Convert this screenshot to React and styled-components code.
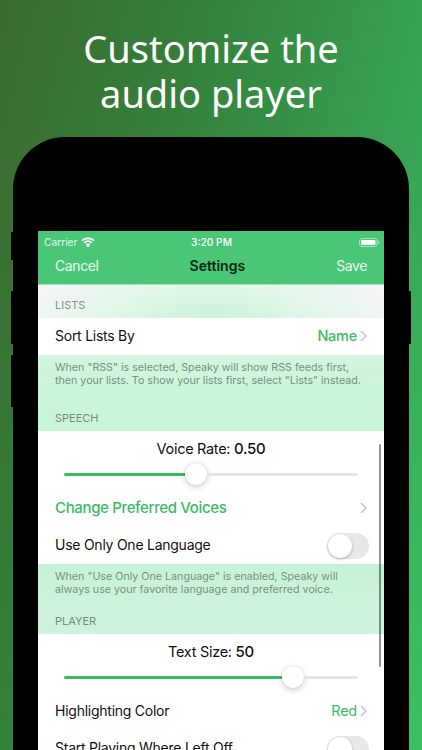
import React from 'react';
import styled, { createGlobalStyle } from 'styled-components';

//------------------ Styles ----------------------

const GlobalStyle = createGlobalStyle`
  html, body {
    margin: 0;
    padding: 0;
    background: #357a35;
  }
`;

const Page = styled.div`
  width: 422px;
  height: 750px;
  overflow: hidden;
  background: linear-gradient(105deg, #3a6a2e 0%, #35803a 32%, #37a052 68%, #3cc063 100%);
  font-family: Inter, 'Liberation Sans', sans-serif;
`;

const Headline = styled.h1`
  margin: 0;
  height: 137px;
  box-sizing: border-box;
  padding-top: 26px;
  font-family: 'Noto Sans', 'Open Sans', sans-serif;
  font-weight: 400;
  font-size: 38px;
  line-height: 45px;
  text-align: center;
  color: #fff;
`;

const Phone = styled.div`
  position: relative;
  width: 396px;
  height: 700px;
  margin-left: 13px;
  box-sizing: border-box;
  padding: 94px 25px 0;
  background: #000;
  border-radius: 52px 52px 0 0;
`;

const SideButton = styled.span`
  position: absolute;
  top: ${props => props.$top}px;
  ${props => props.$side}: -2px;
  width: 2px;
  height: ${props => props.$height}px;
  background: #000;
`;

const Screen = styled.div`
  position: relative;
  height: 606px;
  overflow: hidden;
  background: #fff;
`;

const TopBar = styled.header`
  height: 53px;
  background: #4ac776;
  border-bottom: 1px solid #a5e0b8;
  color: #fff;
`;

const StatusBar = styled.div`
  display: grid;
  grid-template-columns: 1fr auto 1fr;
  align-items: center;
  height: 22px;
  padding: 0 5px 0 6px;
  font-size: 10.2px;
  font-weight: 500;
`;

const Carrier = styled.div`
  display: flex;
  align-items: center;
  gap: 4px;
  font-weight: 400;
  color: #e4f7ea;
`;

const BatteryWrap = styled.div`
  justify-self: end;
  display: flex;
`;

const NavBar = styled.nav`
  display: flex;
  justify-content: space-between;
  align-items: center;
  box-sizing: border-box;
  height: 31px;
  padding: 0 17px 7px;
  font-size: 14px;
  letter-spacing: -0.4px;
  color: #e9f9ee;
`;

const NavTitle = styled.span`
  font-weight: 600;
  letter-spacing: 0;
  color: #0c2414;
`;

const SectionHeader = styled.div`
  display: flex;
  align-items: flex-end;
  box-sizing: border-box;
  height: ${props => props.$height}px;
  padding: 0 17px 6px;
  font-size: 11px;
  line-height: 13px;
  color: ${props => props.$color};
  background: ${props => props.$bg};
`;

const Note = styled.div`
  box-sizing: border-box;
  height: ${props => props.$height}px;
  padding: 6px 17px 0;
  font-size: 10.7px;
  line-height: 13.4px;
  white-space: nowrap;
  color: #73937f;
  background: ${props => props.$bg};
`;

const Row = styled.div`
  display: flex;
  justify-content: space-between;
  align-items: center;
  box-sizing: border-box;
  height: 37px;
  padding: 0 15px 2px 17px;
  font-size: ${props => props.$accent ? 15 : 14}px;
  letter-spacing: ${props => props.$accent ? -0.35 : -0.25}px;
  color: ${props => props.$accent ? '#3bbb63' : '#111'};
  font-weight: ${props => props.$accent ? 500 : 400};
  background: #fff;
`;

const RowValue = styled.span`
  display: flex;
  align-items: center;
  gap: 3px;
  padding-right: 2px;
  font-size: 14.5px;
  font-weight: ${props => props.$bold ? 500 : 400};
  color: #3bbb63;
`;

const SliderCell = styled.div`
  box-sizing: border-box;
  height: 59px;
  padding-top: 9px;
  background: #fff;
`;

const SliderLabel = styled.div`
  text-align: center;
  font-size: 14.5px;
  letter-spacing: -0.3px;
  line-height: 18px;
  color: #111;

  b {
    font-size: 15px;
    font-weight: 500;
  }
`;

const SliderRow = styled.div`
  display: flex;
  align-items: center;
  height: 22px;
  margin: 5px 26px 0;
`;

const SliderFill = styled.div`
  width: ${props => props.$width}px;
  height: 3px;
  border-radius: 2px 0 0 2px;
  background: #3bbb63;
`;

const SliderThumb = styled.div`
  flex: none;
  width: 22px;
  height: 22px;
  border-radius: 50%;
  background: #fff;
  box-shadow: 0 2px 6px rgba(0, 0, 0, 0.2), 0 0 1px rgba(0, 0, 0, 0.2);
`;

const SliderRest = styled.div`
  flex: 1;
  height: 3px;
  border-radius: 0 2px 2px 0;
  background: #e4e4e7;
`;

const Toggle = styled.div`
  box-sizing: border-box;
  width: 42px;
  height: 26px;
  margin: 2px 0 0;
  padding: 1px;
  border-radius: 13px;
  background: #e8e8ea;

  &::before {
    content: '';
    display: block;
    width: 24px;
    height: 24px;
    border-radius: 50%;
    background: #fff;
    box-shadow: 0 1px 3px rgba(0, 0, 0, 0.28);
  }
`;

const ScrollIndicator = styled.div`
  position: absolute;
  top: 213px;
  right: 3px;
  width: 2.5px;
  height: 223px;
  border-radius: 2px;
  background: rgba(0, 0, 0, 0.42);
`;

//------------------ Icons ----------------------

const Wifi = () => (
  <svg width="14" height="10" viewBox="0 0 14 10" fill="none" stroke="#fff" strokeWidth="1.6">
    <path d="M1 3.6C4.4.6 9.6.6 13 3.6" />
    <path d="M3.2 5.8c2.2-1.9 5.4-1.9 7.6 0" />
    <path d="M5.3 7.8c1-.8 2.4-.8 3.4 0" />
    <circle cx="7" cy="9" r="0.6" fill="#fff" />
  </svg>
);

const Battery = () => (
  <svg width="20" height="9" viewBox="0 0 20 9">
    <rect x="0.5" y="0.5" width="17.5" height="8" rx="2.5" fill="none" stroke="#a8e4bd" />
    <rect x="2" y="2" width="14.5" height="5" rx="1" fill="#fff" />
    <rect x="19" y="3" width="1" height="3" rx="0.5" fill="#a8e4bd" />
  </svg>
);

const Chevron = () => (
  <svg width="7" height="12" viewBox="0 0 7 12" fill="none" stroke="#c5c5c9" strokeWidth="1.5">
    <path d="M1 1l5 5-5 5" />
  </svg>
);

//------------------ Component --------------------

const Slider = ({ label, value, fill }) => (
  <SliderCell>
    <SliderLabel>{label}: <b>{value}</b></SliderLabel>
    <SliderRow>
      <SliderFill $width={fill} />
      <SliderThumb />
      <SliderRest />
    </SliderRow>
  </SliderCell>
);

const App = () => (
  <Page>
    <GlobalStyle />
    <Headline>Customize the<br />audio player</Headline>

    <Phone>
      <SideButton $side="left" $top={95} $height={28} />
      <SideButton $side="left" $top={154} $height={53} />
      <SideButton $side="left" $top={218} $height={52} />
      <SideButton $side="right" $top={154} $height={53} />

      <Screen>
        <TopBar>
          <StatusBar>
            <Carrier>Carrier <Wifi /></Carrier>
            <span>3:20 PM</span>
            <BatteryWrap><Battery /></BatteryWrap>
          </StatusBar>
          <NavBar>
            <span>Cancel</span>
            <NavTitle>Settings</NavTitle>
            <span>Save</span>
          </NavBar>
        </TopBar>

        <SectionHeader
          $height={33}
          $color="#85908a"
          $bg="radial-gradient(ellipse 190px 60px at 50% 100%, #c9f3d9 0%, #e2f6e9 55%, #f5f5f6 100%)"
        >
          LISTS
        </SectionHeader>
        <Row>
          Sort Lists By
          <RowValue $bold>Name <Chevron /></RowValue>
        </Row>
        <Note $height={44} $bg="linear-gradient(180deg, #d3f5df 0%, #c9f6d9 100%)">
          When "RSS" is selected, Speaky will show RSS feeds first,<br />
          then your lists. To show your lists first, select "Lists" instead.
        </Note>
        <SectionHeader $height={32} $color="#6f8f7b" $bg="#c9f6d9">SPEECH</SectionHeader>

        <Slider label="Voice Rate" value="0.50" fill={121} />
        <Row $accent>
          Change Preferred Voices
          <RowValue><Chevron /></RowValue>
        </Row>
        <Row>
          Use Only One Language
          <Toggle />
        </Row>
        <Note $height={44} $bg="linear-gradient(180deg, #c5f2d6 0%, #cdf4dc 100%)">
          When "Use Only One Language" is enabled, Speaky will<br />
          always use your favorite language and preferred voice.
        </Note>
        <SectionHeader $height={26} $color="#6f8f7b" $bg="#cdf3dd">PLAYER</SectionHeader>

        <Slider label="Text Size" value="50" fill={218} />
        <Row>
          Highlighting Color
          <RowValue>Red <Chevron /></RowValue>
        </Row>
        <Row>
          Start Playing Where Left Off
          <Toggle />
        </Row>

        <ScrollIndicator />
      </Screen>
    </Phone>
  </Page>
);

export default App;
